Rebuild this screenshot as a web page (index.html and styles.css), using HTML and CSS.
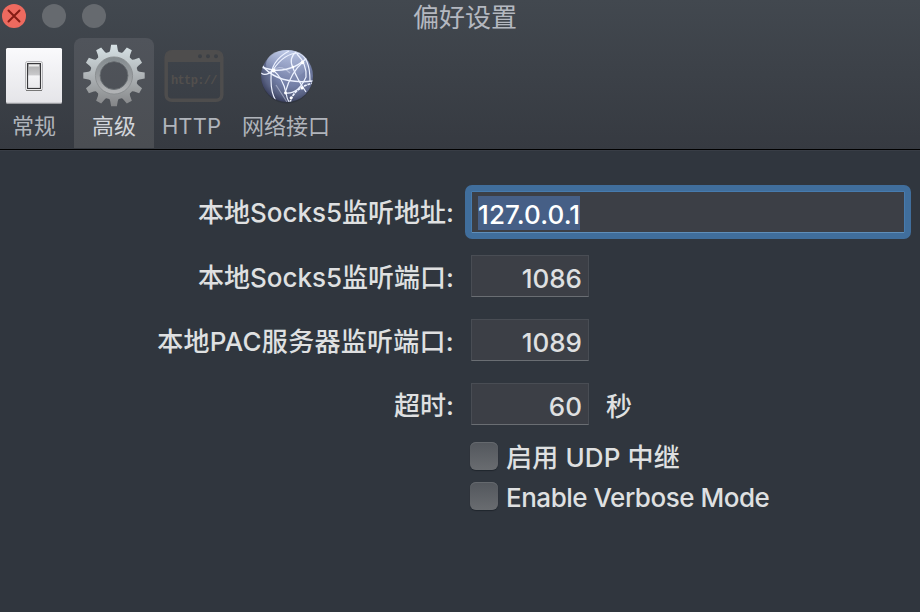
FILE: index.html
```html
<!DOCTYPE html>
<html lang="zh-CN">
<head>
<meta charset="utf-8">
<title>偏好设置</title>
<link rel="stylesheet" href="styles.css">
</head>
<body>
<header class="chrome">
  <div class="titlebar">
    <div class="lights">
      <span class="light close"><svg width="24" height="24" viewBox="0 0 24 24"><path d="M6.5 6.5 17.5 17.5M17.5 6.5 6.5 17.5" stroke="#861c14" stroke-width="2" stroke-linecap="round"/></svg></span>
      <span class="light"></span>
      <span class="light"></span>
    </div>
    <h1 class="title">偏好设置</h1>
  </div>
  <nav class="toolbar">
    <div class="tab general">
      <svg class="icon" width="60" height="64" viewBox="0 0 60 64">
        <defs>
          <linearGradient id="plate" x2="0" y2="1"><stop stop-color="#fafafc"/><stop offset="1" stop-color="#e5e5e9"/></linearGradient>
          <linearGradient id="rocker" x2="0" y2="1"><stop stop-color="#aaa"/><stop offset=".45" stop-color="#c9c9cb"/><stop offset=".5" stop-color="#f4f4f6"/><stop offset="1" stop-color="#e8e8eb"/></linearGradient>
        </defs>
        <rect x="2" y="4.5" width="56" height="55.5" rx="1.5" fill="#9b9ca0"/>
        <rect x="2" y="4" width="56" height="54.7" rx="1.5" fill="url(#plate)"/>
        <rect x="21.5" y="17.5" width="17" height="29" rx="2" fill="#fff" stroke="#b5b5b9"/>
        <path d="M22 46.5h16" stroke="#777" />
        <rect x="23.5" y="19.5" width="13" height="25" fill="url(#rocker)" stroke="#39393c" stroke-width="1.2"/>
        <path d="M25 21.5h10" stroke="#eee" stroke-width="2"/>
      </svg>
      <span>常规</span>
    </div>
    <div class="tab active">
      <svg class="icon" width="64" height="64" viewBox="-32 -31.5 64 64">
        <defs>
          <linearGradient id="steel" gradientUnits="userSpaceOnUse" x1="0" y1="-31" x2="0" y2="31"><stop stop-color="#d7e2e6"/><stop offset=".5" stop-color="#afb4b7"/><stop offset="1" stop-color="#848587"/></linearGradient>
          <linearGradient id="bevel" x2="0" y2="1"><stop stop-color="#858c90"/><stop offset=".5" stop-color="#999da0"/><stop offset="1" stop-color="#b1b3b5"/></linearGradient>
          <mask id="teeth">
            <circle r="19" fill="none" stroke="#fff" stroke-width="10"/>
            <g fill="#fff">
              <path id="t" d="M-5.4 -21.5Q-3.4 -25-2.9 -30.7H2.9Q3.4 -25 5.4 -21.5Z"/>
              <use href="#t" transform="rotate(30)"/><use href="#t" transform="rotate(60)"/><use href="#t" transform="rotate(90)"/>
              <use href="#t" transform="rotate(120)"/><use href="#t" transform="rotate(150)"/><use href="#t" transform="rotate(180)"/>
              <use href="#t" transform="rotate(210)"/><use href="#t" transform="rotate(240)"/><use href="#t" transform="rotate(270)"/>
              <use href="#t" transform="rotate(300)"/><use href="#t" transform="rotate(330)"/>
            </g>
          </mask>
        </defs>
        <rect x="-32" y="-32" width="64" height="64" fill="url(#steel)" mask="url(#teeth)"/>
        <circle r="16.4" fill="none" stroke="url(#bevel)" stroke-width="4.2"/>
        <circle r="18.6" fill="none" stroke="#85898c" stroke-width=".8"/>
        <circle r="14" fill="none" stroke="#6c7175" stroke-width="1"/>
      </svg>
      <span>高级</span>
    </div>
    <div class="tab http">
      <svg class="icon" width="60" height="64" viewBox="0 0 60 64">
        <rect x="2.2" y="7.7" width="55.6" height="48.6" rx="5.5" fill="none" stroke="#4e4d4d" stroke-width="3.5"/>
        <path d="M2 18v-6q0-5 5-5h46q5 0 5 5v6Z" fill="#4e4d4d"/>
        <g fill="#3c4046"><circle cx="36" cy="12.2" r="2"/><circle cx="44" cy="12.2" r="2"/><circle cx="52" cy="12.2" r="2"/></g>
        <text class="protocol" x="7" y="40">http://</text>
      </svg>
      <span>HTTP</span>
    </div>
    <div class="tab network">
      <svg class="icon" width="60" height="64" viewBox="0 0 60 64">
        <defs>
          <radialGradient id="globe" cx=".58" cy=".35" r=".68"><stop stop-color="#8b94b8"/><stop offset=".5" stop-color="#7480a8"/><stop offset=".8" stop-color="#586182"/><stop offset="1" stop-color="#363b59"/></radialGradient>
          <linearGradient id="shine" x2="0" y2="1"><stop stop-color="#dbe6ff" stop-opacity=".75"/><stop offset="1" stop-color="#9fadd5" stop-opacity=".05"/></linearGradient>
          <clipPath id="ball"><circle cx="31" cy="32" r="26"/></clipPath>
        </defs>
        <ellipse cx="31" cy="34" rx="25.5" ry="25.5" fill="#2a2e3a" opacity=".6"/>
        <circle cx="31" cy="32" r="26" fill="url(#globe)"/>
        <ellipse cx="31" cy="20" rx="21" ry="14" fill="url(#shine)"/>
        <g clip-path="url(#ball)" fill="none" stroke="#edf2ff" stroke-width="1.2">
          <path d="M33 7Q14 17 15 36Q15 49 20 57"/>
          <path d="M5 23Q12 25 17 26Q38 28 54 11" stroke-width="1.5"/>
          <path d="M5 20Q20 41 57 37" stroke-width="1.5"/>
          <path d="M5 29Q10 33 17 26Q28 9 43 9Q54 14 54 37"/>
          <path d="M17 26Q27 34 30 49Q31 55 33 58"/>
          <path d="M41 7Q32 14 37 24Q41 35 50 48"/>
          <path d="M47 18Q35 28 29 49"/>
          <path d="M34 59Q37 44 57 39" stroke-width="1.8" stroke-dasharray="3 .8"/>
          <path d="M29 49Q42 51 50 33Q51 20 41 10"/>
          <path d="M17 26Q25 20 34 29M20 41L31 58" opacity=".4"/>
        </g>
        <g fill="#fff"><circle cx="17.5" cy="26.5" r="2"/><circle cx="46.5" cy="18.5" r="1.8"/><circle cx="29.5" cy="49" r="1.4"/><circle cx="37" cy="23" r="1.3"/><circle cx="46" cy="44" r="1.5"/><circle cx="35" cy="54" r="1.4"/></g>
      </svg>
      <span>网络接口</span>
    </div>
  </nav>
</header>
<main class="form">
  <label class="label first">本地Socks5监听地址:</label>
  <div class="field focused"><span class="selection">127.0.0.1</span></div>
  <label class="label">本地Socks5监听端口:</label>
  <div class="field number">1086</div>
  <label class="label pac">本地PAC服务器监听端口:</label>
  <div class="field number">1089</div>
  <label class="label">超时:</label>
  <div class="with-unit"><div class="field number">60</div><span class="unit">秒</span></div>
  <div class="checks">
    <div class="check"><span class="box"></span><span class="udp">启用 UDP 中继</span></div>
    <div class="check"><span class="box"></span><span class="verbose">Enable Verbose Mode</span></div>
  </div>
</main>
</body>
</html>
```
FILE: styles.css
```css
* { box-sizing: border-box; }
body {
  margin: 0;
  height: 612px;
  overflow: hidden;
  background: #30363e;
  color: #dfe0e1;
  font: 500 26px/42px Inter, "Noto Sans CJK SC", sans-serif;
}
.chrome {
  height: 150px;
  background: linear-gradient(#42484f, #363a41);
  border-bottom: 1px solid #000;
  box-shadow: 0 1px #383d45;
}
.titlebar {
  display: grid;
  grid-template-columns: 1fr auto 1fr;
  height: 38px;
  padding: 0 0 0 10px;
}
.lights { display: flex; gap: 16px; padding-top: 4px; margin-left: -8px; }
.light { width: 24px; height: 24px; border-radius: 50%; background: #666a6f; }
.light svg { display: block; fill: none; }
.close { background: #ed6a5f; }
.title {
  margin: 0;
  font-size: 26px;
  font-weight: 400;
  line-height: 36px;
  color: #b4b8c0;
}
.toolbar { display: flex; height: 111px; }
.tab {
  display: flex;
  flex-direction: column;
  align-items: center;
  padding-top: 6px;
  color: #b0b4bb;
  font-size: 22px;
  font-weight: 400;
  line-height: 36px;
  white-space: nowrap;
}
.icon { display: block; flex: none; }
.general { width: 68px; }
.active {
  width: 80px;
  height: 110px;
  margin-left: 6px;
  border-radius: 8px 8px 0 0;
  background: linear-gradient(#50545b, #4b4e53);
  color: #d2d5da;
}
.http { width: 80px; }
.http > span { letter-spacing: .1px; margin-right: 5px; }
.protocol {
  font: 700 12px "Liberation Mono", monospace;
  letter-spacing: -.65px;
  fill: #524f4d;
}
.network { width: 104px; }
.form {
  display: grid;
  grid-template-columns: 454px 434px;
  grid-auto-rows: 42px;
  gap: 22px 17px;
  padding-top: 41px;
}
.label { text-align: right; white-space: nowrap; line-height: 46px; }
.first { line-height: 44px; }
.pac { letter-spacing: .28px; }
.field {
  height: 42px;
  padding: 0 6px;
  background: #3c3f46;
  border: 1px solid #494d54;
  border-bottom: 1px solid #6a6e73;
  line-height: 46px;
}
.number { width: 118px; text-align: right; }
.focused {
  display: flex;
  align-items: flex-start;
  padding: 4px 6px;
  border: 1px solid #477bae;
  border-bottom-color: #5f8fba;
  border-radius: 1px;
  outline: 6px solid #406e9c;
}
.selection { height: 34px; background: #465f86; color: #fff; line-height: 37px; letter-spacing: .1px; }
.with-unit { display: flex; gap: 17px; }
.unit { line-height: 47px; }
.checks { grid-column: 2; margin: -7px 0 0 -1px; }
.check { display: flex; gap: 8px; height: 40px; line-height: 36px; white-space: nowrap; }
.udp { letter-spacing: .15px; }
.verbose { letter-spacing: -.48px; }
.box {
  width: 28px;
  height: 28px;
  margin-top: 2px;
  border-radius: 6px;
  background: linear-gradient(#53575d, #696c70);
  box-shadow: 0 1px 1px #20262d, inset 0 1px #65696e;
}
```
